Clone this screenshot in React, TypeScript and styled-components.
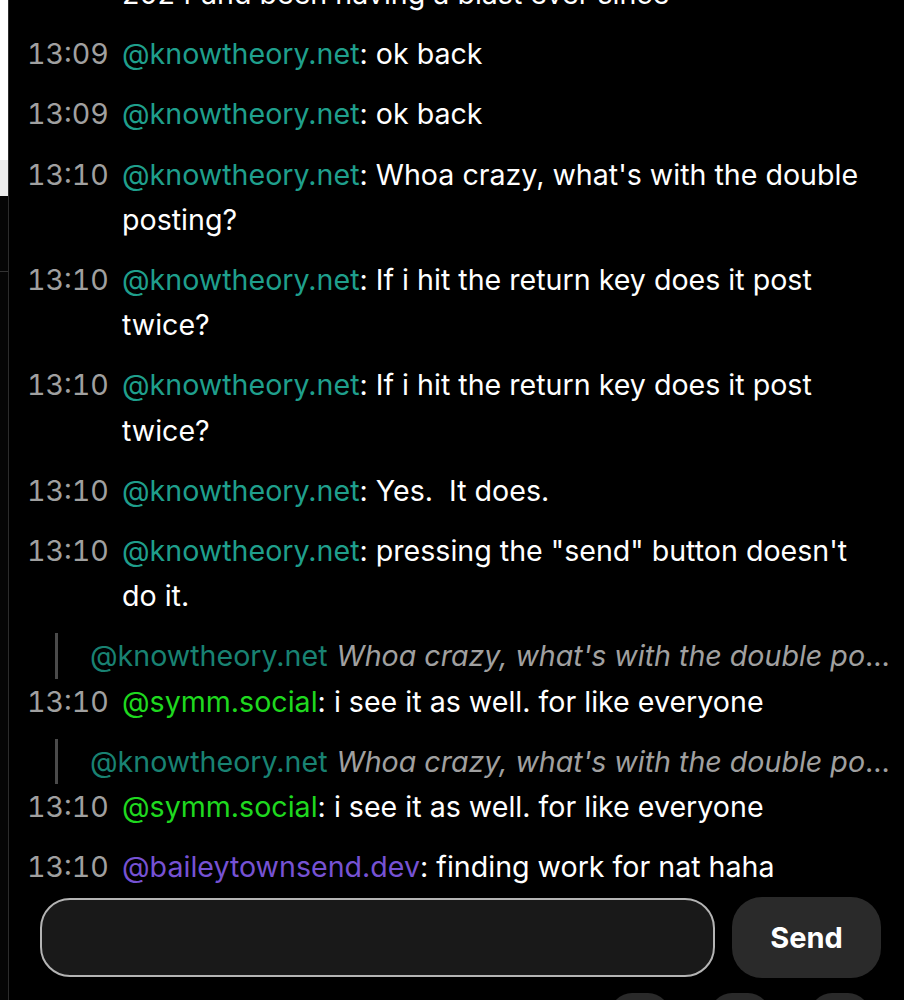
import React from "react";
import styled, { createGlobalStyle } from "styled-components";

const GlobalStyle = createGlobalStyle`
  html, body {
    margin: 0;
    padding: 0;
    height: 1000px;
    overflow: hidden;
    background: #000;
  }
  * { box-sizing: border-box; }
`;

const Page = styled.div`
  display: flex;
  width: 904px;
  height: 1000px;
  overflow: hidden;
`;

const Gutter = styled.div`
  width: 8px;
  flex: none;
  display: flex;
  flex-direction: column;
`;

const GutterBlock = styled.div<{ $h?: number; $bg: string; $line?: boolean }>`
  height: ${(p) => (p.$h ? `${p.$h}px` : "auto")};
  flex: ${(p) => (p.$h ? "none" : "1")};
  background: ${(p) => p.$bg};
  border-bottom: ${(p) => (p.$line ? "1px solid #333" : "none")};
`;

const Panel = styled.div`
  flex: 1;
  min-width: 0;
  height: 1060px;
  display: flex;
  flex-direction: column;
  background: #000;
  border-left: 1px solid #2c2c2c;
  font-family: Inter, "Noto Sans", "Liberation Sans", sans-serif;
  font-size: 28.6px;
  line-height: 45.2px;
  color: #fff;
`;

const MessageList = styled.div`
  flex: 1;
  min-height: 0;
  overflow: hidden;
  display: flex;
  flex-direction: column;
  justify-content: flex-end;
  padding: 0 18px 0 18px;
`;

const MessageItem = styled.div`
  padding: 7.5px 0;
  display: flex;
  flex-direction: column;
`;

const Quote = styled.div`
  margin-left: 28px;
  margin-right: -8px;
  padding-left: 32px;
  border-left: 3px solid #4a4a4a;
  white-space: nowrap;
  overflow: hidden;
  text-overflow: ellipsis;
  color: #a0a0a0;
`;

const QuoteAuthor = styled.span<{ $color: string }>`
  color: ${(p) => p.$color};
  opacity: 0.82;
  margin-right: 9px;
`;

const QuoteText = styled.span`
  font-style: italic;
`;

const Row = styled.div`
  display: grid;
  grid-template-columns: 80px 1fr;
  column-gap: 15px;
`;

const Time = styled.span`
  color: #a0a0a0;
  font-variant-numeric: tabular-nums;
`;

const Body = styled.span`
  white-space: pre-wrap;
  word-wrap: break-word;
`;

const Author = styled.span<{ $color: string }>`
  color: ${(p) => p.$color};
`;

const Composer = styled.div`
  flex: none;
  display: flex;
  align-items: center;
  gap: 17px;
  padding: 0 23px 0 31px;
  height: 81px;
`;

const Input = styled.input`
  flex: 1;
  min-width: 0;
  height: 79px;
  border-radius: 30px;
  border: 2px solid #b4b4b4;
  background: #191919;
  color: #fff;
  font-family: inherit;
  font-size: 28px;
  padding: 0 24px;
  outline: none;
`;

const SendButton = styled.button`
  flex: none;
  width: 149px;
  height: 81px;
  border-radius: 30px;
  border: none;
  background: #2a2a2a;
  color: #fff;
  font-family: inherit;
  font-size: 29px;
  font-weight: 700;
  cursor: pointer;
`;

const ToolRow = styled.div`
  flex: none;
  display: flex;
  justify-content: flex-end;
  gap: 40px;
  padding: 15px 34px 15px 0;
`;

const ToolButton = styled.button`
  width: 60px;
  height: 52px;
  border-radius: 22px;
  border: none;
  background: #2a2a2a;
`;

const TEAL = "#1f9f8c";
const GREEN = "#1fd91f";
const PURPLE = "#7652d4";

type Msg = {
  time: string;
  author: string;
  color: string;
  text: string;
  quote?: { author: string; color: string; text: string };
};

const messages: Msg[] = [
  {
    time: "13:09",
    author: "@knowtheory.net",
    color: TEAL,
    text: "i joined up at the end of\n2024 and been having a blast ever since",
  },
  { time: "13:09", author: "@knowtheory.net", color: TEAL, text: "ok back" },
  { time: "13:09", author: "@knowtheory.net", color: TEAL, text: "ok back" },
  {
    time: "13:10",
    author: "@knowtheory.net",
    color: TEAL,
    text: "Whoa crazy, what's with the double posting?",
  },
  {
    time: "13:10",
    author: "@knowtheory.net",
    color: TEAL,
    text: "If i hit the return key does it post twice?",
  },
  {
    time: "13:10",
    author: "@knowtheory.net",
    color: TEAL,
    text: "If i hit the return key does it post twice?",
  },
  { time: "13:10", author: "@knowtheory.net", color: TEAL, text: "Yes.  It does." },
  {
    time: "13:10",
    author: "@knowtheory.net",
    color: TEAL,
    text: 'pressing the "send" button doesn\'t do it.',
  },
  {
    time: "13:10",
    author: "@symm.social",
    color: GREEN,
    text: "i see it as well. for like everyone",
    quote: {
      author: "@knowtheory.net",
      color: TEAL,
      text: "Whoa crazy, what's with the double posting?",
    },
  },
  {
    time: "13:10",
    author: "@symm.social",
    color: GREEN,
    text: "i see it as well. for like everyone",
    quote: {
      author: "@knowtheory.net",
      color: TEAL,
      text: "Whoa crazy, what's with the double posting?",
    },
  },
  {
    time: "13:10",
    author: "@baileytownsend.dev",
    color: PURPLE,
    text: "finding work for nat haha",
  },
];

export default function App() {
  return (
    <>
      <GlobalStyle />
      <Page>
        <Gutter>
          <GutterBlock $h={160} $bg="#ffffff" />
          <GutterBlock $h={36} $bg="#ececec" />
          <GutterBlock $h={76} $bg="#050505" $line />
          <GutterBlock $bg="#050505" />
        </Gutter>
        <Panel>
          <MessageList>
            {messages.map((m, i) => (
              <MessageItem key={i}>
                {m.quote && (
                  <Quote>
                    <QuoteAuthor $color={m.quote.color}>{m.quote.author}</QuoteAuthor>
                    <QuoteText>{m.quote.text}</QuoteText>
                  </Quote>
                )}
                <Row>
                  <Time>{m.time}</Time>
                  <Body>
                    <Author $color={m.color}>{m.author}</Author>: {m.text}
                  </Body>
                </Row>
              </MessageItem>
            ))}
          </MessageList>
          <Composer>
            <Input aria-label="Message" />
            <SendButton>Send</SendButton>
          </Composer>
          <ToolRow>
            <ToolButton aria-label="tool 1" />
            <ToolButton aria-label="tool 2" />
            <ToolButton aria-label="tool 3" />
          </ToolRow>
        </Panel>
      </Page>
    </>
  );
}
